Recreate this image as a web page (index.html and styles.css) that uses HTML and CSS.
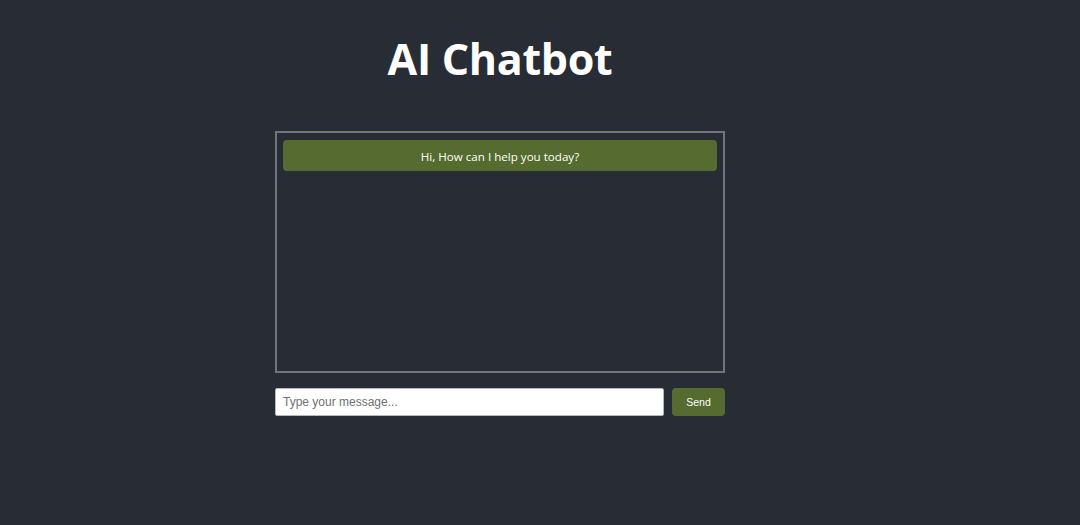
FILE: index.html
```html
<!DOCTYPE html>
<html>
<head>
<meta charset="utf-8">
<link rel="stylesheet" href="styles.css">
</head>
<body>
<main class="app">
  <h1 class="title">AI Chatbot</h1>
  <div class="chat">
    <div class="bubble">Hi, How can I help you today?</div>
  </div>
  <form class="composer">
    <input class="input" type="text" placeholder="Type your message...">
    <button class="send" type="button">Send</button>
  </form>
</main>
</body>
</html>
```
FILE: styles.css
```css
html, body {
  margin: 0;
  padding: 0;
  height: 100%;
  background: #282c34;
}
body {
  font-family: "Open Sans", "Noto Sans", sans-serif;
  color: #fff;
}
.app {
  width: 450px;
  margin-left: 275px;
  padding-top: 30px;
  display: flex;
  flex-direction: column;
}
.title {
  margin: 0;
  text-align: center;
  font-size: 43px;
  font-weight: 700;
  line-height: 58px;
  letter-spacing: -0.3px;
}
.chat {
  box-sizing: border-box;
  margin-top: 43px;
  height: 242px;
  border: 2px solid #74767d;
  padding: 7px 6px;
}
.bubble {
  background: #556b2f;
  border-radius: 4px;
  height: 31px;
  display: flex;
  align-items: center;
  justify-content: center;
  font-size: 11.6px;
  padding-top: 1px;
  box-sizing: border-box;
  color: #fff;
}
.composer {
  margin: 15px 0 0;
  display: flex;
  gap: 8px;
}
.input {
  flex: 1;
  height: 28px;
  box-sizing: border-box;
  border: 1px solid #b8b8b8;
  border-radius: 2px;
  padding: 0 7px;
  font-family: "Liberation Sans", Arial, sans-serif;
  font-size: 12px;
  color: #333;
  background: #fff;
  outline: none;
}
.input::placeholder {
  color: #707070;
}
.send {
  width: 53px;
  height: 28px;
  border: none;
  border-radius: 4px;
  background: #556b2f;
  color: #fff;
  font-family: "Liberation Sans", Arial, sans-serif;
  font-size: 10.5px;
  cursor: pointer;
}
```
